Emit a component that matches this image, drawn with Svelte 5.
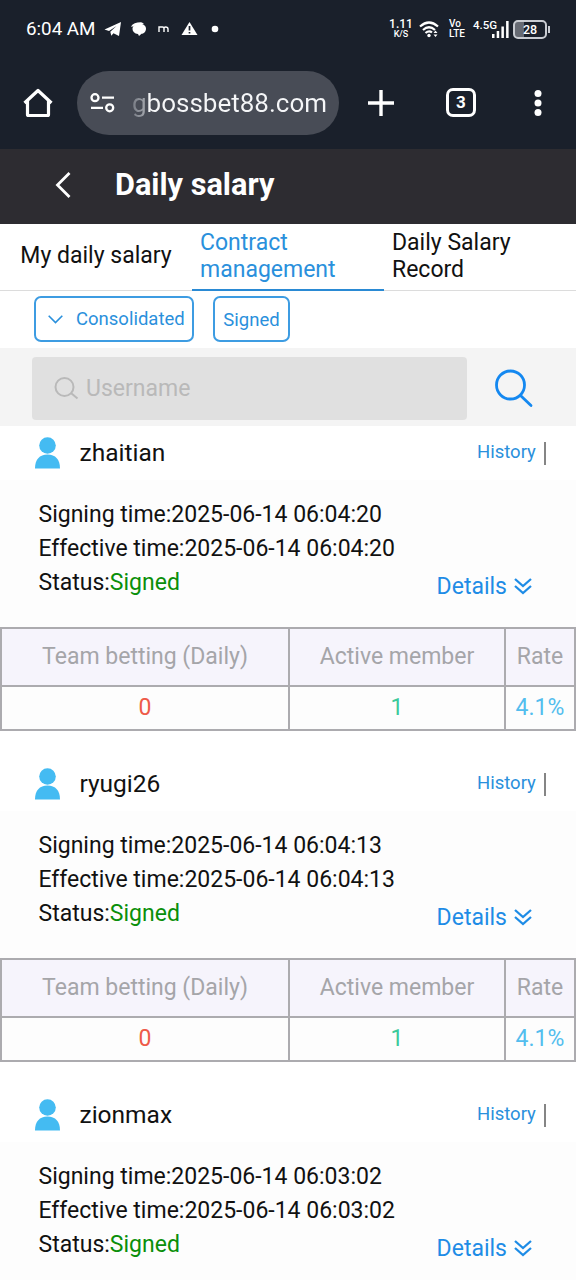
<script lang="ts">
    type Stats = {
        betting: number;
        members: number;
        rate: string;
    };

    type Contract = {
        username: string;
        signedAt: string;
        effectiveAt: string;
        stats?: Stats;
    };

    const tabs = ['My daily salary', 'Contract management', 'Daily Salary Record'];

    let activeTab = 1;
    let username = '';

    const contracts: Contract[] = [
        { username: 'zhaitian', signedAt: '2025-06-14 06:04:20', effectiveAt: '2025-06-14 06:04:20', stats: { betting: 0, members: 1, rate: '4.1%' } },
        { username: 'ryugi26', signedAt: '2025-06-14 06:04:13', effectiveAt: '2025-06-14 06:04:13', stats: { betting: 0, members: 1, rate: '4.1%' } },
        { username: 'zionmax', signedAt: '2025-06-14 06:03:02', effectiveAt: '2025-06-14 06:03:02' },
    ];
</script>

<div class="screen">
    <div class="status-bar">
        <span class="clock">6:04 AM</span>
        <svg class="notifications" width="116" height="20" viewBox="0 0 116 20" fill="#fff">
            <path d="M.500 10.500 17 3 15 17 9.500 14.200 7.300 16.800 6.300 12.800 12.500 7 5 12z" />
            <path d="M27 7.500Q30 3 38 3.400L40 5Q33 4.500 28 7.800z" />
            <path d="M35 4.500c4 0 7 2.200 7 5.200s-2.500 5-4.500 5l-2.500 2.300L34 15c-3.500-.400-5.500-2.300-5.500-5S31 4.500 35 4.500z" />
            <path d="M55 13V8h3.500q1.500 0 1.500 1.500V13M60 9.500Q60 8 61.500 8q2.500 0 2.500 2V13" fill="none" stroke="#fff" stroke-width="1.400" />
            <path d="M85.500 3 93.500 16H77.500z" />
            <path d="M85.500 7v4.500M85.500 13v1.600" stroke="#1a202b" stroke-width="1.700" />
            <circle cx="111" cy="10" r="3.300" />
        </svg>
        <div class="speed"><b>1.11</b><span>K/S</span></div>
        <svg class="wifi" width="20" height="18" viewBox="0 0 20 18" fill="none" stroke="#fff" stroke-width="2.200">
            <path d="M1 6.500Q10-1.500 19 6.500M4 10Q10 4.500 16 10M6.500 13Q10 10 13 12.500" />
            <circle cx="10" cy="15.500" r="1.700" fill="#fff" stroke="none" />
            <path d="M14.500 13 16.500 10.500 18.500 13zM14.500 14.500 16.500 17 18.500 14.500z" fill="#fff" stroke="none" />
        </svg>
        <div class="volte"><span>Vo</span><span>LTE</span></div>
        <span class="network">4.5G</span>
        <svg class="signal" width="17" height="17" viewBox="0 0 17 17" fill="#fff">
            <path d="M0 13h2.500v4H0zM4.700 10h2.500v7H4.700zM9.400 5.500h2.500V17H9.400zM14.100 0h2.500v17h-2.500z" />
        </svg>
        <div class="battery"><span>28</span></div>
        <span class="battery-tip"></span>
    </div>

    <div class="browser-bar">
        <svg class="home" width="30" height="30" viewBox="0 0 30 30" fill="none" stroke="#fff" stroke-width="3.200" stroke-linejoin="round">
            <path d="M1.500 15 15 2.500 28.500 15M4.500 13v13.500q0 1 1 1h19q1 0 1-1V13" />
        </svg>
        <div class="address">
            <svg width="25" height="20" viewBox="0 0 25 20" fill="none" stroke="#fff" stroke-width="2.300">
                <circle cx="5" cy="4.700" r="3.500" />
                <path d="M12 4.700H24M1 14.800H13" />
                <circle cx="19.700" cy="14.800" r="3.500" />
            </svg>
            <span class="url">gbossbet88.com</span>
        </div>
        <svg class="plus" width="26" height="26" viewBox="0 0 26 26" stroke="#fff" stroke-width="3.400">
            <path d="M0 13h26M13 0v26" />
        </svg>
        <div class="tab-count">3</div>
        <svg class="more" width="8" height="28" viewBox="0 0 8 28" fill="#fff">
            <circle cx="4" cy="4.500" r="3.500" />
            <circle cx="4" cy="14" r="3.500" />
            <circle cx="4" cy="23.500" r="3.500" />
        </svg>
    </div>

    <header>
        <svg width="16" height="26" viewBox="0 0 16 26" fill="none" stroke="#fff" stroke-width="2.800">
            <path d="M14.500 1 2.500 13 14.500 25" />
        </svg>
        <h1>Daily salary</h1>
    </header>

    <nav>
        {#each tabs as tab, i}
            <button class="tab" class:active={i === activeTab} on:click={() => (activeTab = i)}>
                <span>{tab}</span>
            </button>
        {/each}
    </nav>

    <div class="filters">
        <button class="filter consolidated">
            <svg width="15" height="9" viewBox="0 0 15 9" fill="none" stroke="#2a90dc" stroke-width="1.600">
                <path d="M.700.700 7.500 7.500 14.300.700" />
            </svg>
            <span>Consolidated</span>
        </button>
        <button class="filter signed">Signed</button>
    </div>

    <div class="search">
        <label>
            <svg width="25" height="24" viewBox="0 0 25 24" fill="none" stroke="#b9b9b9" stroke-width="2">
                <circle cx="10.500" cy="10" r="9" />
                <path d="M17 16 23.500 21.500" />
            </svg>
            <input placeholder="Username" bind:value={username} />
        </label>
        <button class="search-button" aria-label="Search">
            <svg width="40" height="40" viewBox="0 0 40 40" fill="none" stroke="#1488f0" stroke-width="2.800" stroke-linecap="round">
                <circle cx="16.500" cy="16" r="14" />
                <path d="M26.500 26.500 37 36.500" />
            </svg>
        </button>
    </div>

    {#each contracts as contract}
        <section>
            <div class="user">
                <svg width="25" height="32" viewBox="0 0 25 32" fill="#44bbf2">
                    <circle cx="12.500" cy="8.500" r="8.300" />
                    <path d="M0 31.500C0 22.500 4.500 17.500 12.500 17.500S25 22.500 25 31.500z" />
                </svg>
                <span class="name">{contract.username}</span>
                <span class="history">History</span>
                <span class="divider"></span>
            </div>
            <div class="info">
                <p>Signing time:{contract.signedAt}</p>
                <p>Effective time:{contract.effectiveAt}</p>
                <div class="status">
                    <p>Status:<span class="ok">Signed</span></p>
                    <button class="details">
                        <span>Details</span>
                        <svg width="18" height="17" viewBox="0 0 18 17" fill="none" stroke="#1e8ce6" stroke-width="2.300">
                            <path d="M1 1 9 8 17 1M1 8 9 15 17 8" />
                        </svg>
                    </button>
                </div>
            </div>
            {#if contract.stats}
                <table>
                    <thead>
                        <tr><th class="betting">Team betting (Daily)</th><th class="members">Active member</th><th class="rate">Rate</th></tr>
                    </thead>
                    <tbody>
                        <tr><td class="red">{contract.stats.betting}</td><td class="green">{contract.stats.members}</td><td class="blue">{contract.stats.rate}</td></tr>
                    </tbody>
                </table>
            {/if}
        </section>
    {/each}
</div>

<style>
    :global(body) {
        margin: 0;
    }

    .screen {
        box-sizing: border-box;
        width: 576px;
        height: 1280px;
        overflow: hidden;
        background: #fff;
        color: #111;
        font-family: Roboto, "Liberation Sans", sans-serif;
        font-size: 23px;
    }

    .screen * {
        box-sizing: border-box;
    }

    svg {
        display: block;
        flex: none;
    }

    button {
        padding: 0;
        border: none;
        background: none;
        font: inherit;
        color: inherit;
        text-align: left;
    }

    .status-bar {
        display: flex;
        align-items: center;
        height: 58px;
        padding-left: 26px;
        background: #1a202b;
        color: #fff;
    }

    .clock {
        width: 78px;
        font-size: 18.8px;
        white-space: nowrap;
    }

    .speed,
    .volte {
        display: flex;
        flex-direction: column;
        align-items: center;
        font-weight: 500;
        line-height: 10px;
    }

    .speed {
        width: 22px;
        margin-left: 170px;
        font-size: 9px;
    }

    .speed b {
        font-size: 12px;
        font-weight: 500;
    }

    .wifi {
        margin-left: 7px;
    }

    .volte {
        width: 17px;
        margin-left: 10px;
        align-items: flex-start;
        font-size: 10px;
    }

    .network {
        width: 19px;
        margin: 0 0 8px 7px;
        font-size: 11.5px;
        font-weight: 500;
        white-space: nowrap;
    }

    .signal {
        width: 17px;
    }

    .battery {
        width: 34px;
        height: 19px;
        margin-left: 4px;
        border: 2px solid #c9ccd2;
        border-radius: 5px;
        background: linear-gradient(90deg, #666a73 9px, transparent 9px);
        font-size: 12.5px;
        font-weight: 500;
        line-height: 15px;
        text-align: center;
    }

    .battery-tip {
        width: 2px;
        height: 7px;
        margin-left: 1px;
        background: #c9ccd2;
    }

    .browser-bar {
        display: flex;
        align-items: center;
        height: 91px;
        padding: 0 0 2px 23px;
        background: #1a202b;
    }

    .address {
        display: flex;
        align-items: center;
        width: 262px;
        height: 64px;
        margin: 0 29px 0 24px;
        padding-left: 13px;
        border-radius: 32px;
        background: #484c56;
        color: #fff;
    }

    .url {
        margin-left: 17px;
        background: linear-gradient(90deg, #777b84, #a8abb1 15px, #f5f6f8 16px);
        background-clip: text;
        color: transparent;
        font-size: 26px;
    }

    .tab-count {
        width: 30px;
        height: 29px;
        margin-left: 52px;
        border: 3px solid #fff;
        border-radius: 7px;
        color: #fff;
        font-size: 17px;
        font-weight: 700;
        line-height: 23px;
        text-align: center;
    }

    .more {
        margin-left: 57.5px;
    }

    header {
        display: flex;
        align-items: center;
        gap: 44px;
        height: 75px;
        padding: 0 0 4px 55px;
        background: #2d2c31;
        color: #fff;
    }

    h1 {
        margin: 0;
        font-size: 30.7px;
        font-weight: 700;
        line-height: 36px;
    }

    nav {
        display: flex;
        height: 67px;
    }

    .tab {
        display: flex;
        align-items: center;
        justify-content: center;
        width: 192px;
        padding: 0 8px 1px;
        border-bottom: 1px solid #dcdcdc;
        font-size: 23px;
        line-height: 26.5px;
    }

    .tab:not(:first-child) {
        justify-content: flex-start;
    }

    .tab.active {
        padding-bottom: 0;
        border-bottom: 2px solid #2a8ad4;
        color: #2a90dc;
    }

    .filters {
        display: flex;
        gap: 19px;
        height: 57px;
        padding: 5px 0 0 34px;
    }

    .filter {
        display: flex;
        align-items: center;
        height: 46px;
        border: 2px solid #3d9ce2;
        border-radius: 7px;
        color: #2a90dc;
        font-size: 18.5px;
    }

    .consolidated {
        gap: 13px;
        width: 160px;
        padding-left: 12px;
    }

    .consolidated span {
        padding-bottom: 1px;
    }

    .signed {
        justify-content: center;
        width: 77px;
        padding-top: 1px;
    }

    .search {
        display: flex;
        height: 78px;
        padding: 9px 0 0 32px;
        background: #f4f4f4;
    }

    label {
        display: flex;
        align-items: center;
        gap: 7px;
        width: 435px;
        height: 63px;
        padding-left: 22px;
        border-radius: 4px;
        background: #e0e0e0;
    }

    input {
        width: 300px;
        padding: 0;
        border: none;
        background: none;
        font: inherit;
    }

    input::placeholder {
        color: #b9b9b9;
        opacity: 1;
    }

    .search-button {
        height: 40px;
        margin: 12px 0 0 27px;
    }

    section {
        height: 331px;
    }

    .user {
        display: flex;
        align-items: center;
        height: 54px;
        padding-left: 34.5px;
    }

    .name {
        width: 397px;
        padding: 0 0 1px 20px;
        font-size: 24.5px;
    }

    .history {
        width: 87px;
        padding: 0 0 2px 20.5px;
        color: #2a90dc;
        font-size: 18.5px;
    }

    .divider {
        width: 2px;
        height: 23px;
        background: #858585;
    }

    .info {
        height: 147px;
        padding: 18px 44px 0 38.5px;
        background: #fdfdfd;
        line-height: 34px;
    }

    p {
        margin: 0;
    }

    .status {
        display: flex;
        justify-content: space-between;
    }

    .ok {
        color: #0a8f0a;
    }

    .details {
        display: flex;
        align-items: center;
        gap: 7px;
        height: 34px;
        margin-top: 4px;
        color: #1e8ce6;
    }

    .details svg {
        margin-bottom: 1px;
    }

    table {
        width: 576px;
        height: 104px;
        border-collapse: collapse;
        table-layout: fixed;
        background: #fdfdfd;
        text-align: center;
    }

    th,
    td {
        padding: 0 0 1px;
        border: 2px solid #acabaf;
        font-weight: 400;
    }

    th {
        height: 58px;
        background: #f6f4fc;
        color: #a5a5a9;
    }

    td {
        height: 44px;
    }

    .betting {
        width: 288px;
    }

    .members {
        width: 216px;
    }

    .red {
        color: #ee5a48;
    }

    .green {
        color: #3cc99a;
    }

    .blue {
        color: #53bdee;
    }
</style>
